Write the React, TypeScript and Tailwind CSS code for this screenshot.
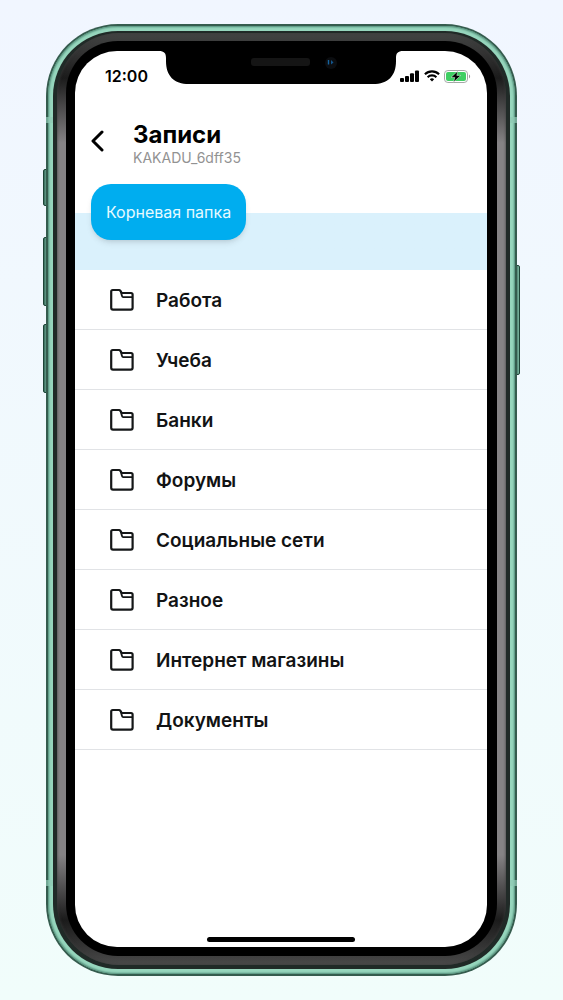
const folders = [
  'Работа',
  'Учеба',
  'Банки',
  'Форумы',
  'Социальные сети',
  'Разное',
  'Интернет магазины',
  'Документы',
];

function FolderIcon() {
  return (
    <svg className="w-6 h-6" viewBox="0 0 24 24" fill="none" stroke="#151718" strokeWidth={2.2} strokeLinejoin="round" aria-hidden="true">
      <path d="M1.2 3.6q0-1.6 1.6-1.6h6.3q.7 0 1.1.6l1.6 2.4h9.2q1.6 0 1.6 1.6v13.2q0 1.8-1.8 1.8H3q-1.8 0-1.8-1.8z" />
      <path d="M10.600 3l1.400 5q.3 1.100 1.200 1.100h9.400" strokeWidth={1.8} />
    </svg>
  );
}

function StatusBar() {
  return (
    <div className="flex items-start justify-between h-[62px] pt-[15px] pl-[30px] pr-4">
      <span className="text-base leading-5 font-semibold">12:00</span>
      <div className="flex items-center gap-1 h-5">
        <svg className="w-5 h-3" viewBox="0 0 20 12" aria-hidden="true">
          <rect x="0" y="8" width="4" height="4" rx="1" />
          <rect x="5" y="6" width="4" height="6" rx="1" />
          <rect x="10" y="3.2" width="4" height="8.8" rx="1" />
          <rect x="15" y="0.4" width="4" height="11.6" rx="1" />
        </svg>
        <svg className="w-4 h-3" viewBox="0 0 16 12" fill="none" stroke="#000" strokeWidth={2.1} aria-hidden="true">
          <path d="M.9 4.3a10.2 10.2 0 0 1 14.2 0" />
          <path d="M3.6 7.2a6.3 6.3 0 0 1 8.8 0" />
          <path d="M8 11.6L5.8 9.3a3.2 3.2 0 0 1 4.4 0z" fill="#000" stroke="none" />
        </svg>
        <svg className="w-[27px] h-[13px]" viewBox="0 0 27 13" aria-hidden="true">
          <rect x=".5" y=".5" width="23" height="12" rx="3.4" fill="#fff" stroke="#a3a8a5" />
          <rect x="2" y="2" width="20" height="9" rx="2" fill="#3fcf63" />
          <path d="M25 4.6c1.5.5 1.5 3.3 0 3.8z" fill="#999" />
          <path d="M13.8 1L7 7.4h3.8L9.6 12l7.2-6.600h-4z" stroke="#e6fbe9" strokeWidth=".5" />
        </svg>
      </div>
    </div>
  );
}

function Notch() {
  return (
    <svg className="absolute top-0 left-1/2 -translate-x-1/2 w-[244px] h-[33px]" viewBox="0 0 244 33" aria-hidden="true">
      <path d="M0 0h244c-5 0-7 2-7 7v3c0 15-8 23-23 23H30C15 33 7 25 7 10V7C7 2 5 0 0 0z" />
      <rect x="92" y="7" width="59" height="8" rx="3" fill="#151515" />
      <circle cx="172" cy="12" r="6" fill="#0b0d10" />
      <path d="M169.5 9v4.5" stroke="#15639f" strokeWidth="1.4" />
      <path d="M172 9v4.5l2.5-2z" fill="#12558c" />
    </svg>
  );
}

function Screen() {
  return (
    <main className="relative flex flex-col min-h-[896px] overflow-hidden rounded-[42px] bg-white">
      <Notch />
      <StatusBar />
      <header className="flex items-start h-[71px] px-4 pt-2">
        <button type="button" aria-label="Назад" className="flex items-center w-[42px] h-10">
          <svg className="w-4 h-6" viewBox="0 0 16 24" fill="none" stroke="#000" strokeWidth={3} strokeLinecap="round" strokeLinejoin="round" aria-hidden="true">
            <path d="M11 3L2 12l9 9" />
          </svg>
        </button>
        <div>
          <h1 className="text-2xl leading-7 font-bold">Записи</h1>
          <p className="text-sm leading-[18px] text-[#929292]">KAKADU_6dff35</p>
        </div>
      </header>
      <nav className="h-[86px] px-4 bg-linear-to-b from-white from-[29px] to-[#daf1fc] to-[29px]">
        <button type="button" className="h-14 px-[15px] rounded-[20px] bg-[#00adef] text-base text-[#e6faff] shadow-md">
          Корневая папка
        </button>
      </nav>
      <ul>
        {folders.map((name) => (
          <li key={name} className="border-b border-[#e1e3e6]">
            <a href="#" className="flex items-center gap-[22px] h-[59px] px-[35px] text-[19px] font-semibold text-[#121314]">
              <FolderIcon />
              <span className="pt-1">{name}</span>
            </a>
          </li>
        ))}
      </ul>
      <div className="w-[148px] h-[5px] mt-auto mx-auto mb-[5px] rounded-full bg-black" />
    </main>
  );
}

// Hardware buttons, drawn over the edge of the body
function SideButtons() {
  const look = 'absolute border border-[#1d4436] bg-linear-to-r from-[#36695a] to-[#7fb9a3]';
  return (
    <>
      <span className={`${look} -left-[3px] top-[145px] w-[5px] h-[37px] rounded-l-xs`} />
      <span className={`${look} -left-[3px] top-[213px] w-[5px] h-[69px] rounded-l-xs`} />
      <span className={`${look} -left-[3px] top-[300px] w-[5px] h-[69px] rounded-l-xs`} />
      <span className={`${look} -right-[3px] top-[241px] w-[5px] h-[110px] rounded-r-xs`} />
    </>
  );
}

export default function App() {
  return (
    <div className="min-h-screen px-[46px] py-6 bg-linear-to-b from-[#f1f6ff] to-[#f1fdfb] font-[Inter,sans-serif] text-black">
      <div className="relative">
        <SideButtons />
        <div className="relative p-[2px] rounded-[72px] bg-[#355c4e]">
          <div className="p-[5px] rounded-[70px] bg-[#96d6bd] shadow-[inset_0_0_2px_1px_#4f8b76]">
            <div className="px-1 pt-[2px] pb-1 rounded-[65px] bg-[#202a27]">
              <div className="px-[9px] pt-2 pb-[9px] rounded-[62px] bg-[linear-gradient(#424443,#333_20px,#1b1b1b_45px,#858385_110px,#858385_calc(100%-110px),#1b1b1b_calc(100%-45px),#333_calc(100%-20px),#4a4a4a)] shadow-[inset_0_0_3px_0_#3a3a3a]">
                <div className="pt-[10px] pl-[9px] pr-[10px] pb-[9px] rounded-[52px] bg-black">
                  <Screen />
                </div>
              </div>
            </div>
          </div>
          <span className="absolute left-0 top-[93px] w-[7px] h-[6px] bg-[#8fc9b4]/70" />
          <span className="absolute right-0 top-[93px] w-[7px] h-[6px] bg-[#8fc9b4]/70" />
          <span className="absolute left-0 bottom-[90px] w-[7px] h-[6px] bg-[#8fc9b4]/70" />
          <span className="absolute right-0 bottom-[90px] w-[7px] h-[6px] bg-[#8fc9b4]/70" />
        </div>
      </div>
    </div>
  );
}
